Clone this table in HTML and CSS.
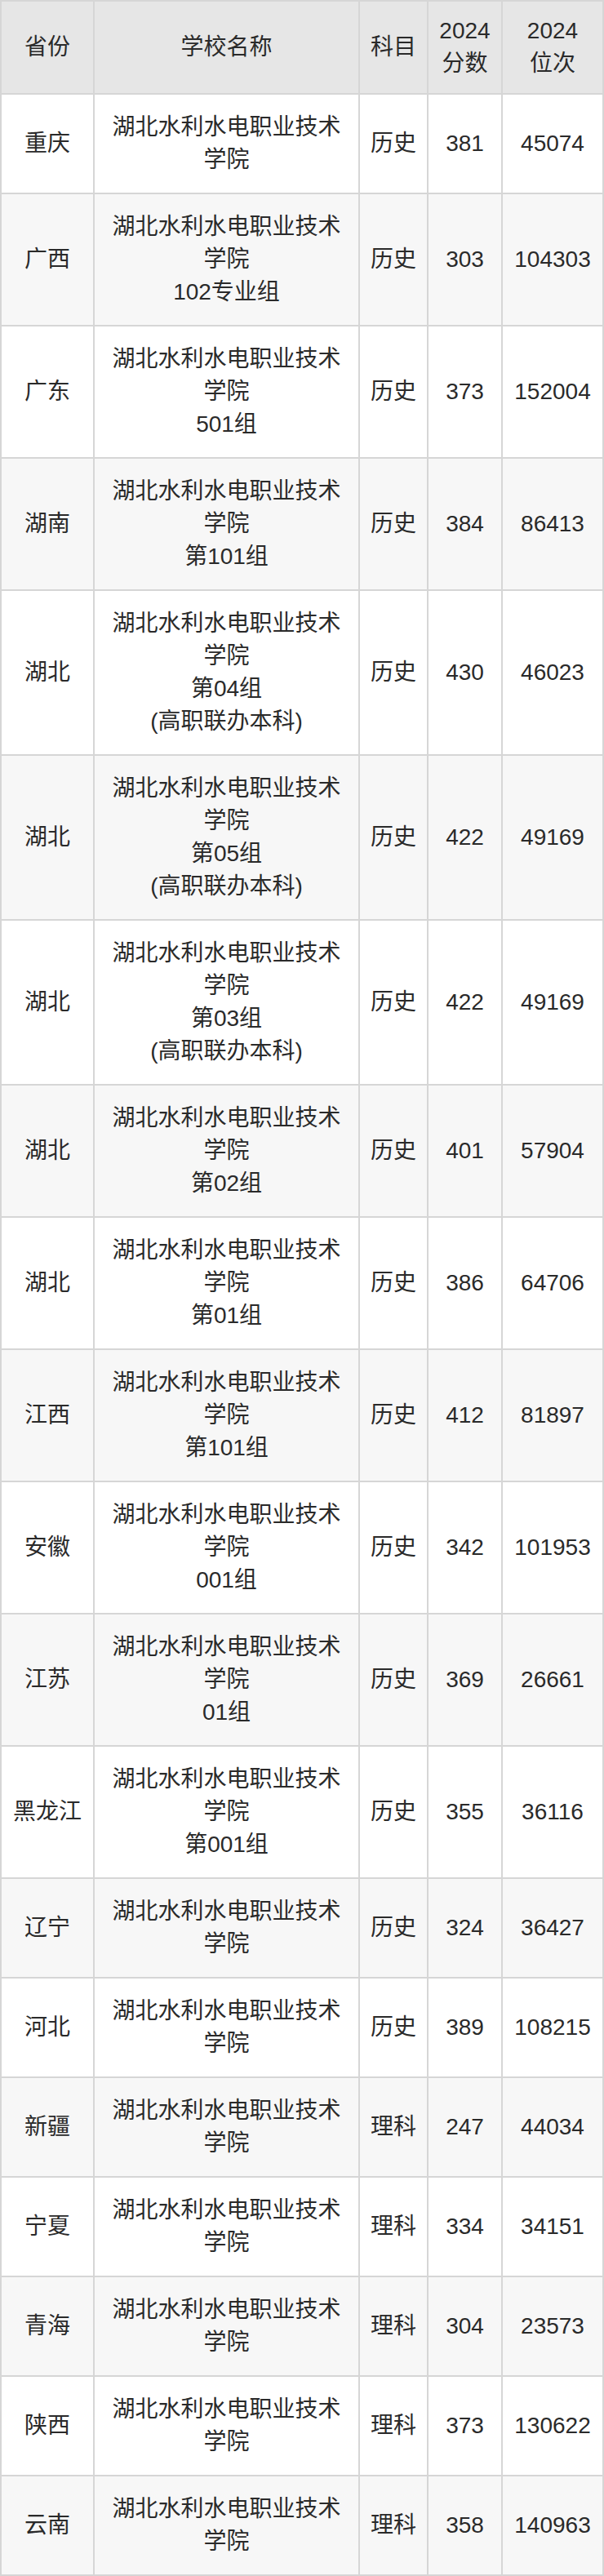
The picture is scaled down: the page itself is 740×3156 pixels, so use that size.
FILE: index.html
```html
<!DOCTYPE html>
<html lang="zh-CN">
<head>
<meta charset="utf-8">
<title>湖北水利水电职业技术学院 2024 录取分数</title>
<link rel="stylesheet" href="styles.css">
</head>
<body>
<table class="score-table">
  <thead>
    <tr>
      <th class="c-prov">省份</th>
      <th class="c-school">学校名称</th>
      <th class="c-subj">科目</th>
      <th class="c-score">2024<br>分数</th>
      <th class="c-rank">2024<br>位次</th>
    </tr>
  </thead>
  <tbody>
    <tr><td>重庆</td><td>湖北水利水电职业技术<br>学院</td><td>历史</td><td>381</td><td>45074</td></tr>
    <tr><td>广西</td><td>湖北水利水电职业技术<br>学院<br>102专业组</td><td>历史</td><td>303</td><td>104303</td></tr>
    <tr><td>广东</td><td>湖北水利水电职业技术<br>学院<br>501组</td><td>历史</td><td>373</td><td>152004</td></tr>
    <tr><td>湖南</td><td>湖北水利水电职业技术<br>学院<br>第101组</td><td>历史</td><td>384</td><td>86413</td></tr>
    <tr><td>湖北</td><td>湖北水利水电职业技术<br>学院<br>第04组<br>(高职联办本科)</td><td>历史</td><td>430</td><td>46023</td></tr>
    <tr><td>湖北</td><td>湖北水利水电职业技术<br>学院<br>第05组<br>(高职联办本科)</td><td>历史</td><td>422</td><td>49169</td></tr>
    <tr><td>湖北</td><td>湖北水利水电职业技术<br>学院<br>第03组<br>(高职联办本科)</td><td>历史</td><td>422</td><td>49169</td></tr>
    <tr><td>湖北</td><td>湖北水利水电职业技术<br>学院<br>第02组</td><td>历史</td><td>401</td><td>57904</td></tr>
    <tr><td>湖北</td><td>湖北水利水电职业技术<br>学院<br>第01组</td><td>历史</td><td>386</td><td>64706</td></tr>
    <tr><td>江西</td><td>湖北水利水电职业技术<br>学院<br>第101组</td><td>历史</td><td>412</td><td>81897</td></tr>
    <tr><td>安徽</td><td>湖北水利水电职业技术<br>学院<br>001组</td><td>历史</td><td>342</td><td>101953</td></tr>
    <tr><td>江苏</td><td>湖北水利水电职业技术<br>学院<br>01组</td><td>历史</td><td>369</td><td>26661</td></tr>
    <tr><td>黑龙江</td><td>湖北水利水电职业技术<br>学院<br>第001组</td><td>历史</td><td>355</td><td>36116</td></tr>
    <tr><td>辽宁</td><td>湖北水利水电职业技术<br>学院</td><td>历史</td><td>324</td><td>36427</td></tr>
    <tr><td>河北</td><td>湖北水利水电职业技术<br>学院</td><td>历史</td><td>389</td><td>108215</td></tr>
    <tr><td>新疆</td><td>湖北水利水电职业技术<br>学院</td><td>理科</td><td>247</td><td>44034</td></tr>
    <tr><td>宁夏</td><td>湖北水利水电职业技术<br>学院</td><td>理科</td><td>334</td><td>34151</td></tr>
    <tr><td>青海</td><td>湖北水利水电职业技术<br>学院</td><td>理科</td><td>304</td><td>23573</td></tr>
    <tr><td>陕西</td><td>湖北水利水电职业技术<br>学院</td><td>理科</td><td>373</td><td>130622</td></tr>
    <tr><td>云南</td><td>湖北水利水电职业技术<br>学院</td><td>理科</td><td>358</td><td>140963</td></tr>
  </tbody>
</table>
</body>
</html>
```

FILE: styles.css
```css
html, body {
  margin: 0;
  padding: 0;
  background: #ffffff;
}

body {
  font-family: "Liberation Sans", Arial, "Noto Sans CJK SC", sans-serif;
  color: #2a2a2a;
}

.score-table {
  width: 740px;
  table-layout: fixed;
  border-collapse: separate;
  border-spacing: 0;
  border-top: 2px solid #d6d6d6;
  border-left: 2px solid #d6d6d6;
}

.score-table th,
.score-table td {
  box-sizing: border-box;
  border-right: 2px solid #d6d6d6;
  border-bottom: 2px solid #d6d6d6;
  font-size: 28px;
  line-height: 40px;
  font-weight: normal;
  text-align: center;
  vertical-align: middle;
  padding: 20px 6px;
}

.score-table th {
  background: #e6e6e6;
  padding: 16px 6px;
}

.c-prov { width: 114px; }
.c-school { width: 325px; }
.c-subj { width: 84px; }
.c-score { width: 91px; }
.c-rank { width: 124px; }

.score-table tbody tr:nth-child(odd) td {
  background: #ffffff;
}

.score-table tbody tr:nth-child(even) td {
  background: #f7f7f7;
}
```
